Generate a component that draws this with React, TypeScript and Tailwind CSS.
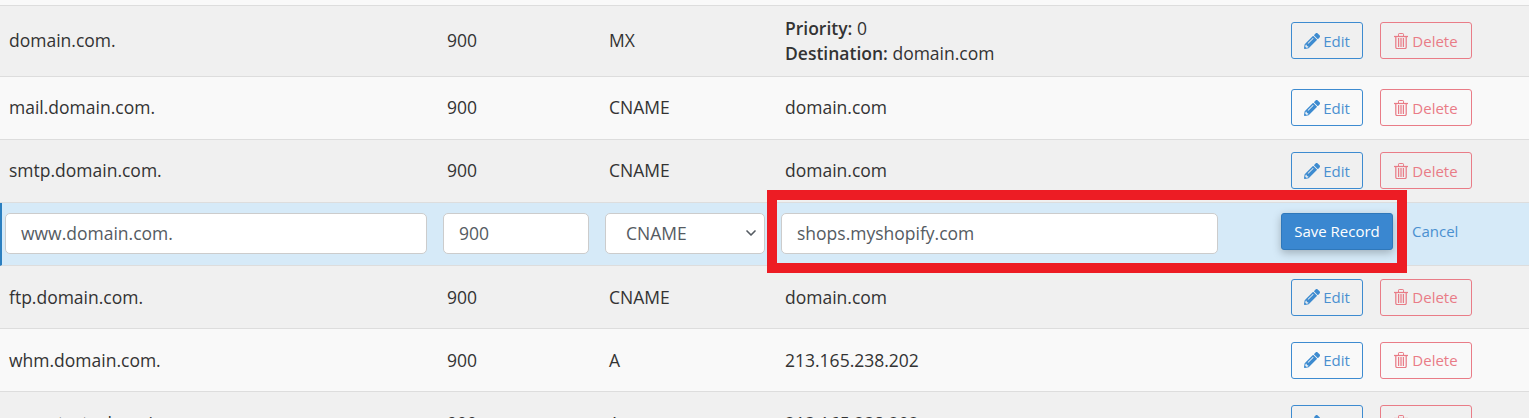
import React from 'react';
import { FaPencilAlt } from 'react-icons/fa';
import { ChevronDown } from 'lucide-react';

type Rec = { name: string; ttl: string; type: string; value?: string; h?: string };

const before: Rec[] = [
    { name: 'domain.com.', ttl: '900', type: 'MX', h: 'h-[71px]' },
    { name: 'mail.domain.com.', ttl: '900', type: 'CNAME', value: 'domain.com' },
    { name: 'smtp.domain.com.', ttl: '900', type: 'CNAME', value: 'domain.com' },
];

const after: Rec[] = [
    { name: 'ftp.domain.com.', ttl: '900', type: 'CNAME', value: 'domain.com' },
    { name: 'whm.domain.com.', ttl: '900', type: 'A', value: '213.165.238.202' },
    { name: 'cpcontacts.domain.com.', ttl: '900', type: 'A', value: '213.165.238.202' },
];

const TrashIcon = () => (
    <svg width="14" height="16" viewBox="0 0 14 16" fill="none" stroke="currentColor" strokeWidth="1.25" className="mr-[1px]">
        <path d="M0 3.5h14" />
        <path d="M4.5 3.5V1.2c0-.4.3-.7.7-.7h3.6c.4 0 .7.3.7.7v2.3" strokeWidth="1" />
        <path d="M1.8 3.5v10.8c0 .7.5 1.2 1.2 1.2h8c.7 0 1.2-.5 1.2-1.2V3.5" />
        <path d="M4.6 5v9M7 5v9M9.4 5v9" />
    </svg>
);

const Row = ({ rec, striped, up }: { rec: Rec; striped: boolean; up?: boolean }) => (
    <div className={`grid grid-cols-[438px_162px_176px_506px_1fr] items-center pl-[9px] border-b border-[#dddddd] ${up ? 'pb-[2px]' : ''} ${rec.h ?? 'h-[63px]'} ${striped ? 'bg-[#f0f0f0]' : 'bg-[#f9f9f9]'}`}>
        <div>{rec.name}</div>
        <div>{rec.ttl}</div>
        <div>{rec.type}</div>
        <div className={`leading-[25px] ${rec.value ? '' : 'mt-[2px]'}`}>
            {rec.value ?? (
                <>
                    <div><b className="font-semibold">Priority:</b> 0</div>
                    <div><b className="font-semibold">Destination:</b> domain.com</div>
                </>
            )}
        </div>
        <div className="flex items-center gap-[17px]">
            <button className={`flex items-center justify-center gap-[3px] w-[72px] h-[37px] border border-[#3d8bd0] rounded-[3px] text-[15px] text-[#4a90d0] ${up ? 'pt-[2px]' : ''}`}>
                <FaPencilAlt className="text-[16px] text-[#3d8bd0]" />
                Edit
            </button>
            <button className={`flex items-center justify-center gap-[3px] w-[92px] h-[37px] border border-[#e97c87] rounded-[3px] text-[15px] text-[#e97c87] ${up ? 'pt-[2px]' : ''}`}>
                <TrashIcon />
                Delete
            </button>
        </div>
    </div>
);

const fieldClass = 'h-[41px] bg-white border border-[#cccccc] rounded-[5px] text-[#555b62] flex items-center';

export default function App() {
    return (
        <div className="relative h-[418px] w-full overflow-hidden bg-[#f9f9f9] text-[17.5px] text-[#333333] font-['Open_Sans',sans-serif]">
            <div className="h-[6px] border-b border-[#dddddd] bg-[#f9f9f9]" />
            {before.map((rec, i) => <Row key={rec.name} rec={rec} striped={i % 2 === 0} up />)}

            <div className="flex items-center h-[63px] pb-[2px] bg-[#d6eaf8] border-l-[2px] border-l-[#2b7fc0] border-b border-b-[#dddddd] pl-[3px]">
                <div className={`${fieldClass} w-[422px] pl-[15px]`}>www.domain.com.</div>
                <div className={`${fieldClass} w-[146px] ml-[16px] pl-[15px]`}>900</div>
                <div className={`${fieldClass} w-[160px] ml-[16px] pl-[20px] justify-between pr-[5px]`}>
                    CNAME
                    <ChevronDown size={16} strokeWidth={2.5} className="text-[#555b62]" />
                </div>
                <div className={`${fieldClass} w-[437px] ml-[16px] pl-[15px]`}>shops.myshopify.com</div>
                <button className="w-[112px] h-[37px] ml-[63px] -mt-[3px] bg-[#3a87d0] border border-[#2f78bb] rounded-[3px] text-[15px] text-white shadow-[0_3px_8px_rgba(0,0,0,0.25)]">Save Record</button>
                <span className="ml-[19px] -mt-[3px] text-[15px] text-[#4a90d0]">Cancel</span>
            </div>

            {after.map((rec, i) => <Row key={rec.name} rec={rec} striped={i % 2 === 0} />)}

            {/* red highlight drawn on top of the screenshot */}
            <div className="absolute left-[767px] top-[190px] w-[640px] h-[83px] border-[10px] border-[#ed1c24] pointer-events-none" />
        </div>
    );
}
